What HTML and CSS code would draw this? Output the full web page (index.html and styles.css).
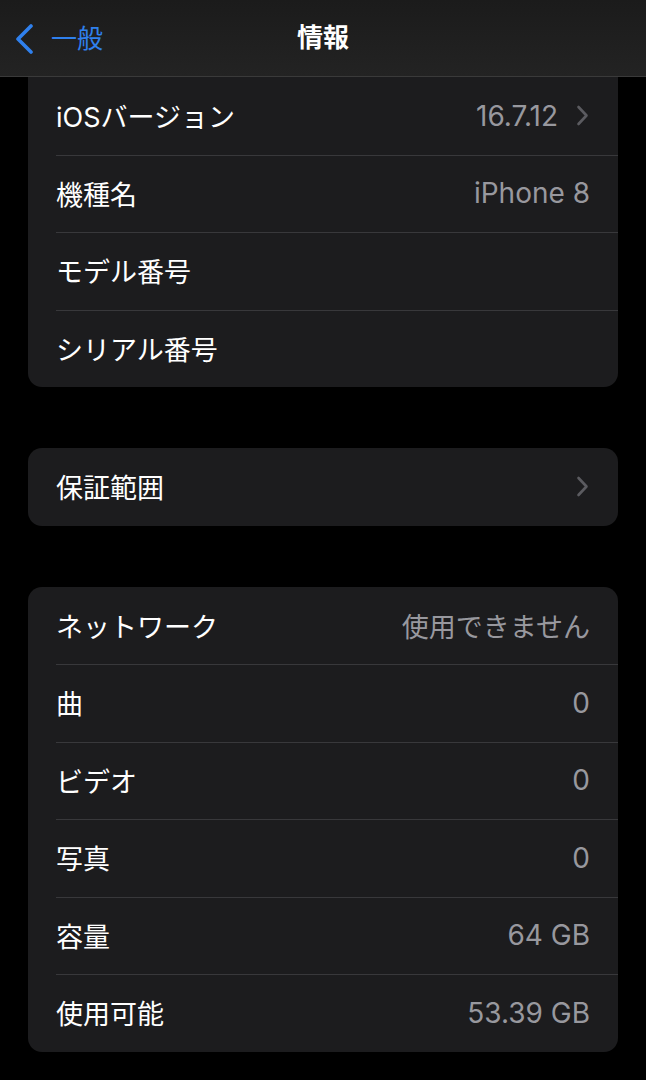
FILE: index.html
```html
<!DOCTYPE html>
<html lang="ja">
<head>
<meta charset="utf-8">
<link rel="stylesheet" href="styles.css">
</head>
<body>
<header class="nav">
  <div class="back">
    <svg class="back-icon" width="22" height="30" viewBox="0 0 22 30"><path d="M18 2 L5 15 L18 28" fill="none" stroke="#2f80ed" stroke-width="3.6" stroke-linecap="round" stroke-linejoin="round"/></svg>
    <span class="back-label">一般</span>
  </div>
  <div class="title">情報</div>
</header>
<main class="content">
  <section class="group first">
    <div class="row"><span class="label">iOSバージョン</span><span class="value num">16.7.12</span><svg class="chev" width="13" height="21" viewBox="0 0 13 21"><path d="M2.5 2 L10.5 10.5 L2.5 19" fill="none" stroke="#5b5b60" stroke-width="2.6" stroke-linecap="round" stroke-linejoin="round"/></svg></div>
    <div class="row"><span class="label">機種名</span><span class="value num">iPhone 8</span></div>
    <div class="row"><span class="label">モデル番号</span><span class="value"></span></div>
    <div class="row"><span class="label">シリアル番号</span><span class="value"></span></div>
  </section>
  <section class="group">
    <div class="row"><span class="label">保証範囲</span><span class="value"></span><svg class="chev" width="13" height="21" viewBox="0 0 13 21"><path d="M2.5 2 L10.5 10.5 L2.5 19" fill="none" stroke="#5b5b60" stroke-width="2.6" stroke-linecap="round" stroke-linejoin="round"/></svg></div>
  </section>
  <section class="group">
    <div class="row"><span class="label">ネットワーク</span><span class="value">使用できません</span></div>
    <div class="row"><span class="label">曲</span><span class="value num">0</span></div>
    <div class="row"><span class="label">ビデオ</span><span class="value num">0</span></div>
    <div class="row"><span class="label">写真</span><span class="value num">0</span></div>
    <div class="row"><span class="label">容量</span><span class="value num">64 GB</span></div>
    <div class="row"><span class="label">使用可能</span><span class="value num">53.39 GB</span></div>
  </section>
</main>
</body>
</html>
```
FILE: styles.css
```css
html, body {
  margin: 0;
  padding: 0;
  background: #000;
}
body {
  width: 646px;
  height: 1080px;
  overflow: hidden;
  font-family: "Inter", "Noto Sans CJK JP", sans-serif;
  color: #fff;
}
.nav {
  height: 76px;
  background: linear-gradient(180deg, #1b1b1b 0%, #232323 100%);
  border-bottom: 1px solid #3a3a3a;
  display: flex;
  align-items: center;
  justify-content: center;
  position: relative;
}
.back {
  position: absolute;
  left: 13px;
  top: 24px;
  display: flex;
  align-items: center;
  gap: 16px;
}
.back-label {
  color: #2f80ed;
  font-size: 26px;
  line-height: 30px;
}
.title {
  font-size: 26px;
  font-weight: 700;
  line-height: 30px;
}
.content {
  padding: 0 28px;
  display: flex;
  flex-direction: column;
  gap: 61px;
}
.group {
  background: #1c1c1e;
  border-radius: 14px;
  overflow: hidden;
}
.group.first {
  border-radius: 0 0 14px 14px;
}
.row {
  height: 77.5px;
  display: flex;
  align-items: center;
  padding: 0 28px;
  box-sizing: border-box;
  position: relative;
}
.row + .row::before {
  content: "";
  position: absolute;
  left: 28px;
  right: 0;
  top: 0;
  height: 1px;
  background: #38383b;
}
.label {
  font-size: 27px;
  flex: 1;
  white-space: nowrap;
}
.value {
  font-size: 27px;
  color: #98989e;
  white-space: nowrap;
}
.value.num {
  font-size: 28px;
}
.chev {
  flex: none;
  margin-left: 18px;
  margin-right: 1px;
}
```
